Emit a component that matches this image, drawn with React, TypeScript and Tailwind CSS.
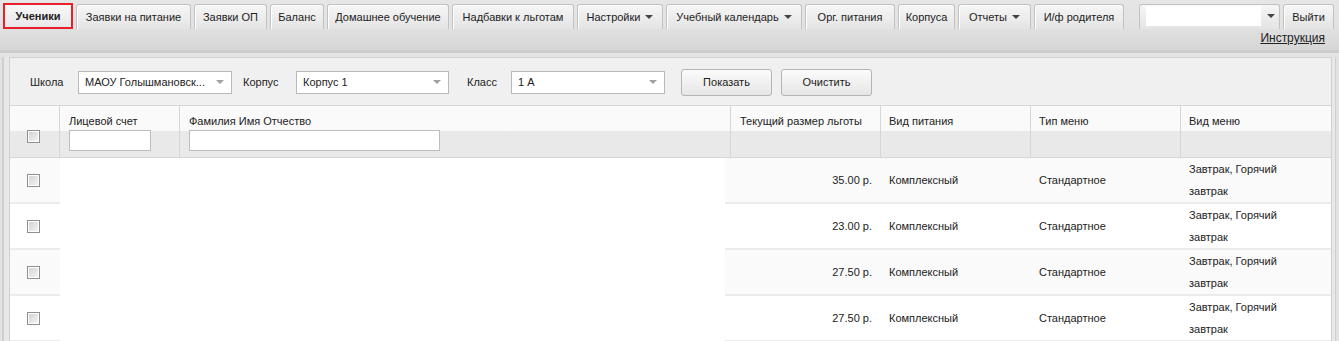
import React from 'react';

const tabs = [
    { label: 'Заявки на питание', w: 115 },
    { label: 'Заявки ОП', w: 73 },
    { label: 'Баланс', w: 54 },
    { label: 'Домашнее обучение', w: 122 },
    { label: 'Надбавки к льготам', w: 122 },
    { label: 'Настройки', w: 86, arrow: true },
    { label: 'Учебный календарь', w: 136, arrow: true },
    { label: 'Орг. питания', w: 90 },
    { label: 'Корпуса', w: 57 },
    { label: 'Отчеты', w: 73, arrow: true },
    { label: 'И/ф родителя', w: 90 },
];

const rows = ['35.00 р.', '23.00 р.', '27.50 р.', '27.50 р.'];

const Arrow = ({ light }: { light?: boolean }) => (
    <span
        className={
            'inline-block w-0 h-0 border-l-[4px] border-r-[4px] border-t-[4px] border-l-transparent border-r-transparent ' +
            (light ? 'border-t-[#a0a0a0]' : 'border-t-[#444]')
        }
    />
);

const Checkbox = () => (
    <div className="w-[13px] h-[13px] border border-[#8f8f8f] bg-white p-[1px]">
        <div className="w-full h-full bg-gradient-to-br from-[#d4d4d8] to-[#f4f4f6]" />
    </div>
);

const Select = ({ value, w }: { value: string; w: number }) => (
    <div
        className="h-[23px] border border-[#b9b9b9] bg-white flex items-center justify-between pl-[6px] pr-[7px] text-[#222]"
        style={{ width: w }}
    >
        <span className="truncate">{value}</span>
        <Arrow light />
    </div>
);

const Button = ({ label, w }: { label: string; w: number }) => (
    <div
        className="h-[27px] rounded-[3px] border border-[#b4b4b4] bg-gradient-to-b from-[#fbfbfb] to-[#e6e6e6] flex items-center justify-center text-[#222]"
        style={{ width: w }}
    >
        {label}
    </div>
);

const Tab = ({ label, w, arrow }: { label: string; w: number; arrow?: boolean }) => (
    <div
        className="mt-[1px] h-[25px] rounded-t-[3px] border border-b-0 border-[#c2c2c2] bg-gradient-to-b from-[#f6f6f6] to-[#e4e4e4] shadow-[inset_1px_1px_0_#fff] flex items-center justify-center gap-[5px] text-[#222]"
        style={{ width: w }}
    >
        <span>{label}</span>
        {arrow && <Arrow />}
    </div>
);

export default function App() {
    return (
        <div className="w-[1339px] h-[341px] overflow-hidden bg-[#e4e4e4] text-[11px] leading-[13px] text-[#222] font-['Liberation_Sans',Arial,sans-serif]">
            {/* header */}
            <div className="h-[53px] bg-gradient-to-b from-[#e6e6e6] via-[#e2e2e2] to-[#d6d6d6] border-b-[3px] border-[#cdcdcd]">
                <div className="flex items-start gap-[3px] pl-[3px] pt-[3px]">
                    <div className="w-[70px] h-[26px] border-2 border-[#e8202a] bg-gradient-to-b from-[#f8f8f8] to-[#e8e8e8] flex items-center justify-center font-bold text-[#222]">
                        Ученики
                    </div>
                    {tabs.map((t) => (
                        <Tab key={t.label} {...t} />
                    ))}
                    <div className="ml-[12px] mt-[1px] w-[141px] h-[25px] rounded-t-[3px] border border-b-0 border-[#c2c2c2] bg-gradient-to-b from-[#f6f6f6] to-[#e4e4e4] flex items-start pl-[6px] pt-[1px]">
                        <div className="w-[115px] h-[20px] bg-white" />
                        <div className="ml-[6px] h-[20px] flex items-center">
                            <Arrow />
                        </div>
                    </div>
                    <Tab label="Выйти" w={51} />
                </div>
                <div className="flex justify-end pr-[14px] mt-[3px]">
                    <span className="underline text-[#222] text-[12px]">Инструкция</span>
                </div>
            </div>

            {/* body */}
            <div className="flex h-[288px] pt-[4px]">
                <div className="w-[2px] bg-[#e2e2e2]" />
                <div className="w-[2px] bg-[#cfcfcf]" />
                <div className="w-[5px] bg-[#e8e8e8]" />
                <div className="w-[1323px] border border-b-0 border-[#d0d0d0] bg-white">
                    {/* filter bar */}
                    <div className="h-[48px] bg-[#f0f0f0] border-b border-[#d6d6d6] flex items-center pl-[20px] pt-[1px]">
                        <span className="w-[48px]">Школа</span>
                        <Select value="МАОУ Голышмановск..." w={154} />
                        <span className="ml-[11px] w-[53px]">Корпус</span>
                        <Select value="Корпус 1" w={153} />
                        <span className="ml-[18px] w-[44px]">Класс</span>
                        <Select value="1 А" w={154} />
                        <div className="ml-[16px]">
                            <Button label="Показать" w={91} />
                        </div>
                        <div className="ml-[9px]">
                            <Button label="Очистить" w={91} />
                        </div>
                    </div>

                    {/* table header */}
                    <div className="grid grid-cols-[50px_120px_551px_150px_150px_150px_150px] h-[52px] border-b border-[#d6d6d6] bg-gradient-to-b from-[#fafafa] from-50% to-[#e9e9e9] to-50%">
                        <div className="border-r border-[#d6d6d6] flex items-center pl-[17px] pt-[9px]">
                            <Checkbox />
                        </div>
                        <div className="border-r border-[#d6d6d6] pl-[9px] pt-[9px]">
                            <div>Лицевой счет</div>
                            <div className="mt-[2px] w-[82px] h-[21px] border border-[#bdbdbd] bg-white" />
                        </div>
                        <div className="border-r border-[#d6d6d6] pl-[9px] pt-[9px]">
                            <div>Фамилия Имя Отчество</div>
                            <div className="mt-[2px] w-[251px] h-[21px] border border-[#bdbdbd] bg-white" />
                        </div>
                        <div className="border-r border-[#d6d6d6] pl-[9px] pt-[9px]">Текущий размер льготы</div>
                        <div className="border-r border-[#d6d6d6] pl-[8px] pt-[9px]">Вид питания</div>
                        <div className="border-r border-[#d6d6d6] pl-[8px] pt-[9px]">Тип меню</div>
                        <div className="pl-[8px] pt-[9px]">Вид меню</div>
                    </div>

                    {/* rows */}
                    {rows.map((sum, i) => {
                        const bg = i % 2 === 0 ? 'bg-[#fafafa]' : 'bg-white';
                        return (
                            <div key={i} className="grid grid-cols-[50px_665px_156px_150px_150px_150px] h-[46px]">
                                <div className={`${bg} border-b-2 border-[#ececec] flex items-center pl-[17px]`}>
                                    <Checkbox />
                                </div>
                                <div className="bg-white" />
                                <div className={`${bg} border-b-2 border-[#ececec] flex items-center justify-end pr-[9px]`}>
                                    {sum}
                                </div>
                                <div className={`${bg} border-b-2 border-[#ececec] flex items-center pl-[8px]`}>
                                    Комплексный
                                </div>
                                <div className={`${bg} border-b-2 border-[#ececec] flex items-center pl-[8px]`}>
                                    Стандартное
                                </div>
                                <div className={`${bg} border-b-2 border-[#ececec] flex items-center pl-[8px] leading-[22px]`}>
                                    <div>
                                        Завтрак, Горячий
                                        <br />
                                        завтрак
                                    </div>
                                </div>
                            </div>
                        );
                    })}
                </div>
                <div className="w-[3px] bg-[#e8e8e8]" />
                <div className="w-[1px] bg-[#d0d0d0]" />
                <div className="flex-1 bg-[#e2e2e2]" />
            </div>
        </div>
    );
}
